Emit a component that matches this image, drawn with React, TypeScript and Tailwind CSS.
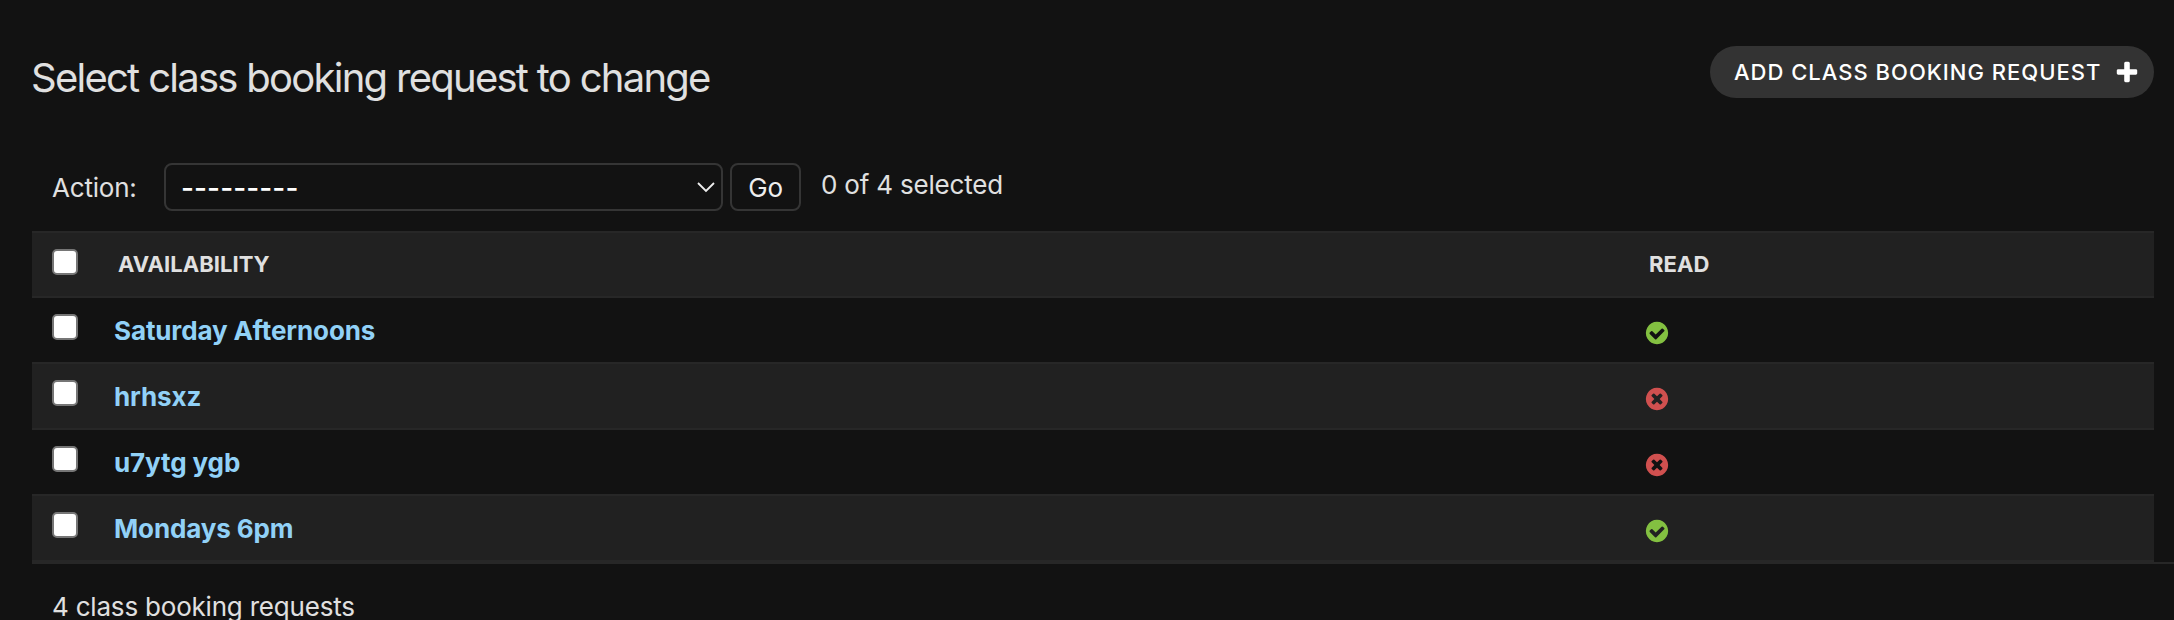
import React from "react";

type Booking = { availability: string; read: boolean };

const bookings: Booking[] = [
  { availability: "Saturday Afternoons", read: true },
  { availability: "hrhsxz", read: false },
  { availability: "u7ytg ygb", read: false },
  { availability: "Mondays 6pm", read: true },
];

function Checkbox({ label }: { label: string }) {
  return (
    <input
      type="checkbox"
      aria-label={label}
      className="block size-[26px] shrink-0 appearance-none rounded-[5px] border-2 border-[#767676] bg-white"
    />
  );
}

function StatusIcon({ read }: { read: boolean }) {
  return read ? (
    <svg viewBox="0 0 1792 1792" className="block size-[26px]" role="img" aria-label="True">
      <path
        fill="#83c041"
        d="M1412 734q0-28-18-46l-91-90q-19-19-45-19t-45 19l-408 407-226-226q-19-19-45-19t-45 19l-91 90q-18 18-18 46 0 27 18 45l362 362q19 19 45 19 27 0 46-19l543-543q18-18 18-45zm252 162q0 209-103 385.500t-279.500 279.500-385.500 103-385.500-103-279.500-279.500-103-385.500 103-385.500 279.500-279.500 385.500-103 385.500 103 279.500 279.500 103 385.500z"
      />
    </svg>
  ) : (
    <svg viewBox="0 0 1792 1792" className="block size-[26px]" role="img" aria-label="False">
      <path
        fill="#d0504f"
        d="M1277 1122q0-26-19-45l-181-181 181-181q19-19 19-45 0-27-19-46l-90-90q-19-19-46-19-26 0-45 19l-181 181-181-181q-19-19-45-19-27 0-46 19l-90 90q-19 19-19 46 0 26 19 45l181 181-181 181q-19 19-19 45 0 27 19 46l90 90q19 19 46 19 26 0 45-19l181-181 181 181q19 19 45 19 27 0 46-19l90-90q19-19 19-46zm387-226q0 209-103 385.500t-279.500 279.500-385.500 103-385.500-103-279.500-279.500-103-385.500 103-385.500 279.500-279.500 385.500-103 385.500 103 279.500 279.500 103 385.500z"
      />
    </svg>
  );
}

export default function App() {
  return (
    <main className="flex h-[620px] flex-col overflow-hidden bg-[#121212] font-['Inter',sans-serif] text-[26px] leading-[36px] tracking-[-0.2px] text-[#e0e0e0]">
      <header className="flex items-start justify-between pt-[46px] pr-5 pl-[31px]">
        <h1 className="pt-2 text-[40px] leading-[48px] font-normal tracking-[-1.75px] [word-spacing:0.2px] whitespace-nowrap">
          Select class booking request to change
        </h1>
        <a className="flex h-[52px] w-[444px] items-center justify-between rounded-full bg-[#333] pr-[14px] pl-6 text-[22px] font-medium tracking-[1px] whitespace-nowrap text-white">
          <span>ADD CLASS BOOKING REQUEST</span>
          <svg viewBox="0 0 1792 1792" className="size-[26px]" aria-hidden="true">
            <path
              fill="#fff"
              d="M1600 796v192q0 40-28 68t-68 28h-416v416q0 40-28 68t-68 28h-192q-40 0-68-28t-28-68v-416h-416q-40 0-68-28t-28-68v-192q0-40 28-68t68-28h416v-416q0-40 28-68t68-28h192q40 0 68 28t28 68v416h416q40 0 68 28t28 68z"
            />
          </svg>
        </a>
      </header>

      <div className="mt-[61px] flex h-12 items-center pl-[52px] whitespace-nowrap">
        <span className="w-[112px] pt-0.5">Action:</span>
        <div className="flex h-12 w-[559px] items-center justify-between rounded-lg border-2 border-[#353535] pr-[6px] pl-[15px] text-white">
          <span className="pt-px text-[28px] font-medium tracking-[0.1px]">---------</span>
          <svg viewBox="0 0 18 12" className="h-3 w-[18px]" fill="none" aria-hidden="true">
            <path d="M1 2l8 8 8-8" stroke="#eee" strokeWidth="1.8" />
          </svg>
        </div>
        <button className="ml-[7px] h-12 w-[71px] rounded-lg border-2 border-[#353535] pt-0.5 text-[#eee]">Go</button>
        <span className="ml-5 pb-1">0 of 4 selected</span>
      </div>

      <section className="mt-5 mr-5 ml-8">
        <div className="flex h-[67px] border-y-2 border-[#272727] bg-[#212121]">
          <div className="w-[86px] pt-4 pl-5">
            <Checkbox label="Select all" />
          </div>
          <div className="w-[1531px] pt-[13px] text-[22px] font-bold tracking-[0.05px]">AVAILABILITY</div>
          <div className="pt-[13px] text-[22px] font-bold tracking-[0.05px]">READ</div>
        </div>
        {bookings.map(({ availability, read }) => (
          <div
            key={availability}
            className="flex h-[66px] border-b-2 border-[#272727] odd:bg-[#212121] even:bg-[#121212]"
          >
            <div className="w-[82px] pt-4 pl-5">
              <Checkbox label={availability} />
            </div>
            <a className="w-[1530px] pt-[15px] font-bold tracking-[-0.12px] text-[#91d1f7]">{availability}</a>
            <div className="pt-[22px]">
              <StatusIcon read={read} />
            </div>
          </div>
        ))}
      </section>
      <div className="ml-8 border-t-2 border-[#272727] pt-[25px] pl-5">4 class booking requests</div>
    </main>
  );
}
